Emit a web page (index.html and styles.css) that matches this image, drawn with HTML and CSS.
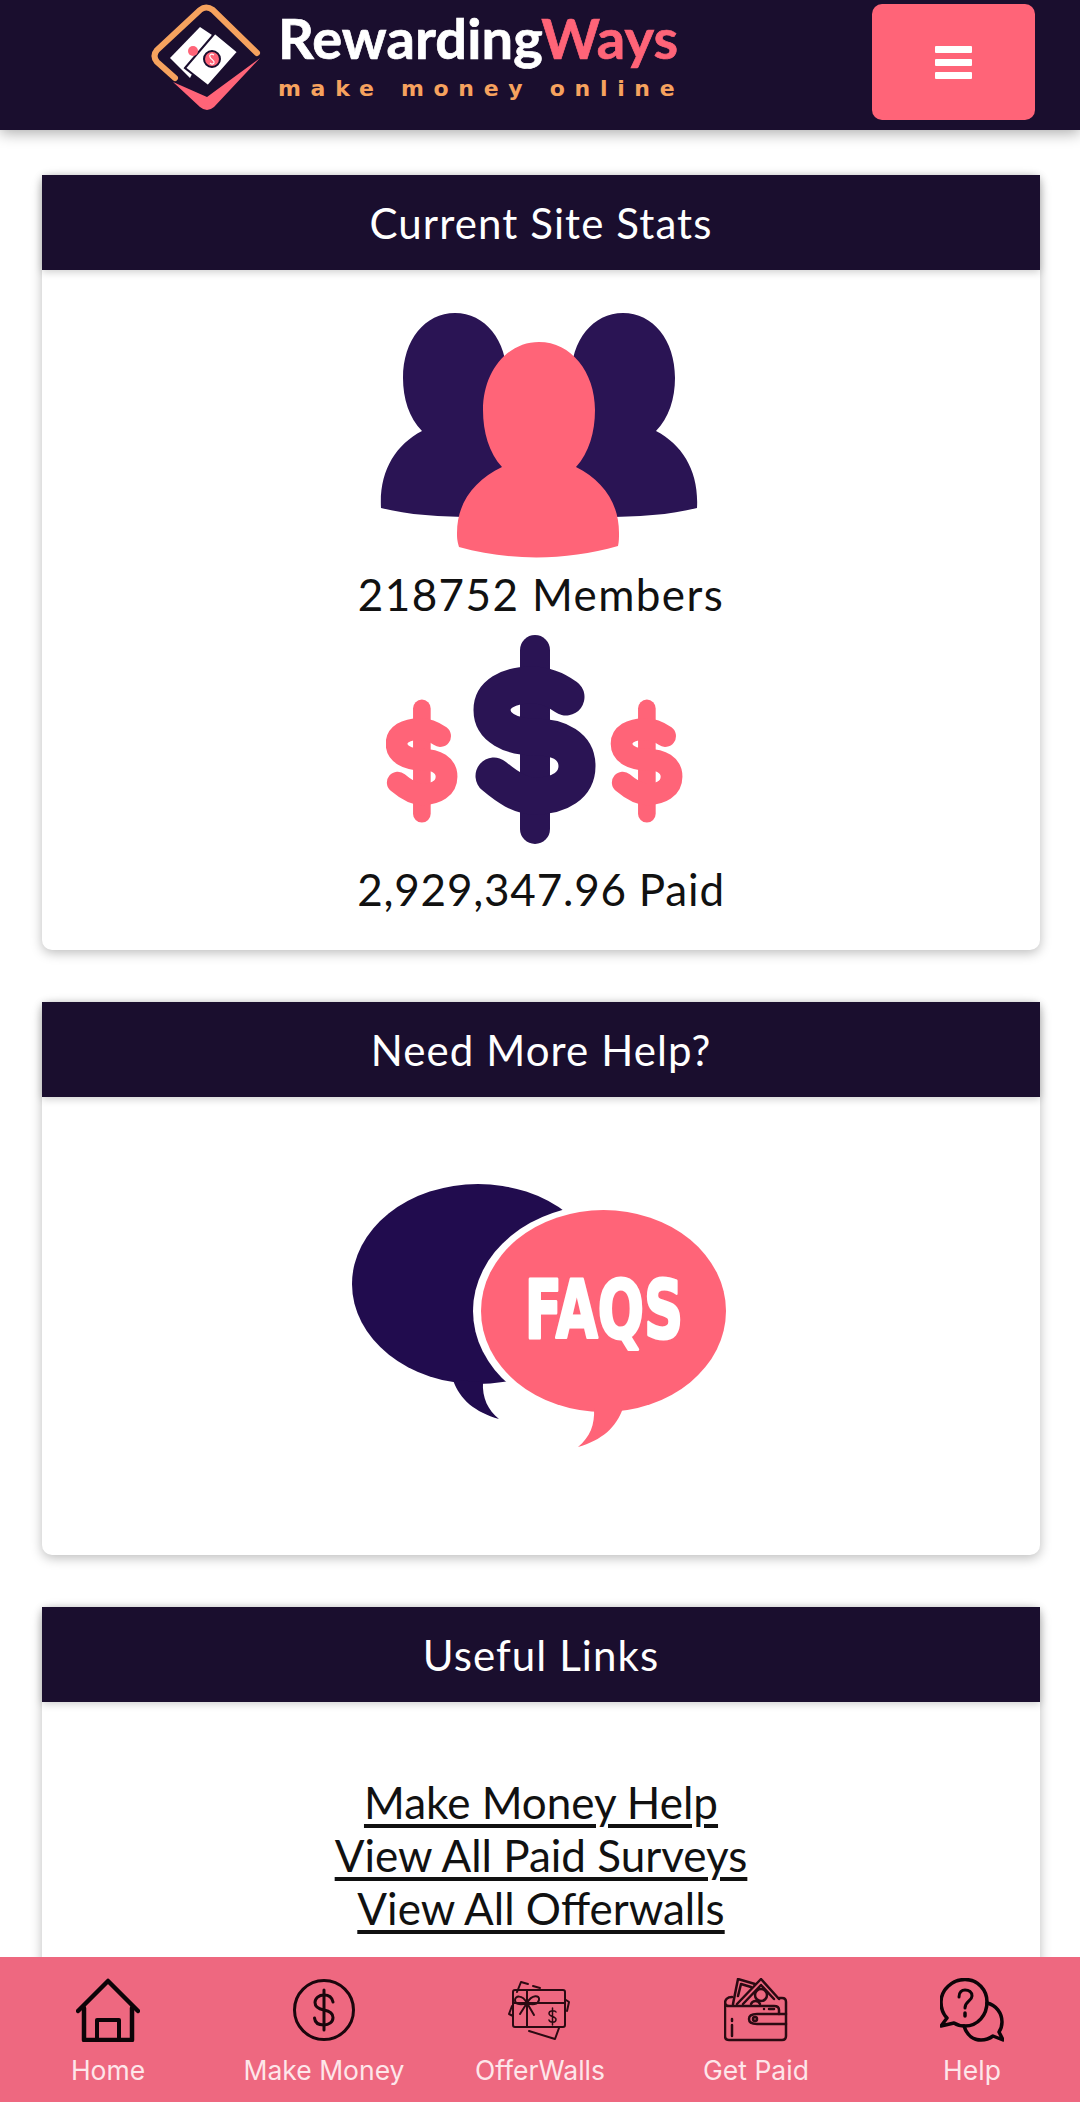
FILE: index.html
```html
<!DOCTYPE html>
<html lang="en">
<head>
  <meta charset="UTF-8">
  <meta name="viewport" content="width=device-width, initial-scale=1.0">
  <title>RewardingWays</title>
  <link rel="stylesheet" href="styles.css">
</head>
<body>
  <div class="page">
    <header class="topbar">
      <a class="brand" href="#">
        <svg class="brand-mark" viewBox="10 0 112 112" width="112" height="112">
          <path d="M35 78 L17 62 Q12 56 17 50 L60 10 Q66 5 73 10 L117 53" fill="none" stroke="#f6a25e" stroke-width="6" stroke-linecap="round"/>
          <path d="M33 82 L67 97 L120 58 L74 107 Q67 113 60 107Z" fill="#ff6478"/>
          <path d="M30 58 L60 27 L72 35 L50 78Z" fill="#fff"/>
          <path d="M45 68 L75 33 L98 52 L68 86Z" fill="#fff" stroke="#1a0e2e" stroke-width="2"/>
          <circle cx="53" cy="51" r="5" fill="#ff6478"/>
          <circle cx="72" cy="59" r="8" fill="#ff6478" stroke="#1a0e2e" stroke-width="2"/>
          <path d="M74 55 C71 53 69 55 70 57 C71 60 75 60 74 63 C73 65 71 64 70 63" fill="none" stroke="#fff" stroke-width="1.200"/>
        </svg>
        <span class="brand-text">
          <span class="brand-name">Rewarding<em>Ways</em></span>
          <span class="brand-tag">make money online</span>
        </span>
      </a>
      <button class="menu-btn" type="button" aria-label="Menu"><i></i><i></i><i></i></button>
    </header>

    <main class="content">
      <section class="card stats">
        <h2 class="card-head">Current Site Stats</h2>
        <svg class="users-art" viewBox="40 23 322 245" width="322" height="245">
          <g fill="#2a1454">
            <path d="M41 218 C39 182 55 155 82 141 C69 128 63 108 63 88 C63 50 85 23 115 23 C145 23 167 50 167 88 L190 226 C130 228 80 228 41 218Z"/>
            <path d="M357 218 C359 182 343 155 316 141 C329 128 335 108 335 88 C335 50 313 23 283 23 C253 23 231 50 231 88 L208 226 C268 228 318 228 357 218Z"/>
          </g>
          <path d="M119 257 C117 250 117 247 117 243 C117 212 135 190 162 177 C149 163 143 142 143 120 C143 82 167 52 199 52 C231 52 255 82 255 120 C255 142 249 163 236 177 C262 190 279 212 279 243 C279 247 279 252 278 256 C225 271 170 271 119 257Z" fill="#ff6478"/>
        </svg>
        <p class="stat">218752 Members</p>
        <svg class="money-art" viewBox="46 15 310 212" width="310" height="212">
          <defs>
            <g id="dollar" fill="none" stroke-width="37" stroke-linecap="round">
              <path d="M195 31 V210" stroke-width="30"/>
              <path d="M226 78 C215 70 205 66 192 66 C167 66 152 76 152 91 C152 108 170 118 195 118 C220 118 237 128 237 147 C237 166 220 177 195 177 C180 177 167 168 154 157"/>
            </g>
          </defs>
          <use href="#dollar" stroke="#2a1454"/>
          <use href="#dollar" stroke="#ff6478" transform="translate(-32.8 71.2) scale(.588)"/>
          <use href="#dollar" stroke="#ff6478" transform="translate(192.2 71.2) scale(.588)"/>
        </svg>
        <p class="stat stat-paid">2,929,347.96 Paid</p>
      </section>

      <section class="card help">
        <h2 class="card-head">Need More Help?</h2>
        <svg class="faq-art" viewBox="22 23 374 264" width="374" height="264">
          <ellipse cx="148" cy="124" rx="126" ry="100" fill="#210c4e"/>
          <path d="M123 220 C130 240 145 252 169 259 C158 250 152 238 153 222Z" fill="#210c4e"/>
          <ellipse cx="272" cy="151" rx="129" ry="106" fill="#fff"/>
          <ellipse cx="273.500" cy="151" rx="122.500" ry="101" fill="#ff6478"/>
          <path d="M264 248 C265 265 260 277 248 287 C272 280 286 268 293 248Z" fill="#ff6478"/>
          <text class="faq-text" transform="translate(274 178) scale(.68 1)" text-anchor="middle">FAQS</text>
        </svg>
      </section>

      <section class="card links">
        <h2 class="card-head">Useful Links</h2>
        <div class="link-list">
          <a href="#">Make Money Help</a>
          <a href="#">View All Paid Surveys</a>
          <a href="#">View All Offerwalls</a>
        </div>
      </section>
    </main>

    <nav class="bottom-nav">
      <a class="nav-item" href="#">
        <svg viewBox="0 0 64 64" width="64" height="64" fill="none" stroke="#0d0408" stroke-width="4.500" stroke-linejoin="round" stroke-linecap="round">
          <path d="M2 33 L32 3 L62 33"/>
          <path d="M8 30 V62 H56 V30"/>
          <path d="M21 62 V42 H43 V62" stroke-width="4"/>
        </svg>
        <span>Home</span>
      </a>
      <a class="nav-item" href="#">
        <svg viewBox="0 0 64 64" width="64" height="64" fill="none" stroke="#1a060c" stroke-linecap="round">
          <circle cx="32" cy="32" r="29.500" stroke-width="3"/>
          <path d="M41 24 C40 19 36 17 32 17 C27 17 23 20 23 24.500 C23 29 27 31 32 32 C37 33 41 35 41 39.500 C41 44 37 47 32 47 C27 47 23 45 22.500 40" stroke-width="3"/>
          <path d="M32 12 V52" stroke-width="3"/>
        </svg>
        <span>Make Money</span>
      </a>
      <a class="nav-item" href="#">
        <svg viewBox="0 0 64 64" width="64" height="64" fill="none" stroke="#2b0a12" stroke-width="2" stroke-linecap="round" stroke-linejoin="round">
          <path d="M9 14 L13 4 L20 6 M25 8 L32 10"/>
          <path d="M4 28 L1 36 L5 38"/>
          <path d="M21 53 L47 61 L51 50"/>
          <path d="M58 22 L61 24 L59 33"/>
          <rect x="5" y="12" width="52" height="37" rx="2"/>
          <path d="M5 25 H57 M19 12 V49"/>
          <path d="M19 25 C14 16 7 18 7 22 C7 27 14 27 19 25 C24 16 32 17 31 22 C30 27 24 27 19 25 M19 25 L12 36 M19 25 L26 37"/>
          <path d="M48 34 C47 32 41 32 41 35.500 C41 39 48 38 48 41.500 C48 45 42 45 41 42 M44.500 30 V47" stroke-width="1.500"/>
        </svg>
        <span>OfferWalls</span>
      </a>
      <a class="nav-item" href="#">
        <svg viewBox="0 0 64 64" width="64" height="64" fill="none" stroke="#2b0a12" stroke-width="2.500" stroke-linecap="round" stroke-linejoin="round">
          <path d="M9 26 L14 1 L31 6"/>
          <path d="M13 26 L37 1 L55 21"/>
          <path d="M14 18 L17 6 L27 9 M19 26 L37 7 L50 21"/>
          <circle cx="37" cy="17" r="6"/>
          <path d="M27 26 C29 22 34 22 36 26"/>
          <path d="M8 19 C3 19 1 22 1 25 V58 Q1 62 5 62 H58 Q62 62 62 58 V46"/>
          <path d="M1 25 Q1 28 5 28 H50 Q55 28 55 32 V36"/>
          <path d="M55 20 H58 Q62 20 62 24 V36"/>
          <path d="M62 46 H33 Q25 46 25 41 Q25 36 33 36 H62 V46Z"/>
          <circle cx="31" cy="41" r="2"/>
          <path d="M8 41 V43 M8 47 V58 M40 31 V31 M45 31 H50"/>
        </svg>
        <span>Get Paid</span>
      </a>
      <a class="nav-item" href="#">
        <svg viewBox="0 0 64 64" width="64" height="64" fill="none" stroke="#0d0408" stroke-width="3.500" stroke-linejoin="round" stroke-linecap="round">
          <path d="M25 1.500 C12 1.500 1 12 1 24 C1 31 3 36 7 40 L1 48 L14 45 C17 47 21 48 25 48 C38 48 47 37 47 24 C47 12 38 1.500 25 1.500Z"/>
          <path d="M47 25 C56 27 62 35 62 44 C62 48 61 51 59 54 L63 62 L53 58 C49 61 45 62 41 62 C34 62 27 58 24 48"/>
          <path d="M19 19 C19 14 22 12 25 12 C29 12 32 14 32 18 C32 23 25 23 25 30" stroke-width="3"/>
          <path d="M25 35 V38" stroke-width="3.500"/>
        </svg>
        <span>Help</span>
      </a>
    </nav>
  </div>
</body>
</html>
```

FILE: styles.css
```css
* { box-sizing: border-box; }
html, body { margin: 0; height: 100%; }
body { font-family: Lato, "Open Sans", sans-serif; background: #fff; color: #111; }
a { color: inherit; }

.page { height: 100vh; display: flex; flex-direction: column; overflow: hidden; }

.topbar { flex: none; height: 130px; background: #1a0e2e; box-shadow: 0 3px 14px #0005; display: flex; align-items: flex-start; padding: 4px 45px 0 150px; position: relative; z-index: 2; }
.brand { display: flex; align-items: flex-start; gap: 16px; margin-top: -4px; text-decoration: none; }
.brand-mark { display: block; }
.brand-text { display: flex; flex-direction: column; width: 400px; }
.brand-name { font-weight: bold; font-size: 56px; line-height: 64px; margin-top: 6px; letter-spacing: .1px; color: #fff; -webkit-text-stroke: .7px; white-space: nowrap; }
.brand-name em { font-style: normal; color: #ff6478; }
.brand-tag { font-family: "DejaVu Sans", sans-serif; font-weight: bold; font-size: 22px; line-height: 26px; letter-spacing: 9.700px; color: #f6a25e; white-space: nowrap; margin-top: 6px; }
.menu-btn { margin-left: auto; width: 163px; height: 116px; border: 0; border-radius: 10px; background: #ff6478; display: flex; flex-direction: column; align-items: center; justify-content: center; gap: 6px; padding: 0; }
.menu-btn i { display: block; width: 37px; height: 7px; background: #fff; border-radius: 1px; }

.content { flex: 1; min-height: 0; overflow: hidden; padding: 45px 40px 0 42px; }

.card { background: #fff; border-radius: 10px; box-shadow: 0 3px 12px #0004; margin-bottom: 52px; text-align: center; }
.card-head { margin: 0; height: 95px; background: #1a0e2e; color: #fff; font-size: 42px; font-weight: 400; line-height: 97px; letter-spacing: 1.100px; box-shadow: 0 2px 8px #0003; }
.stats { height: 775px; }
.help { height: 553px; }
.links { height: 600px; }
.users-art { display: block; margin: 43px auto 0; }
.money-art { display: block; margin: 13px auto 0; }
.stat { margin: 10px 0 0; font-size: 44px; line-height: 53px; letter-spacing: 1.400px; }
.stat-paid { margin-top: 17px; letter-spacing: .8px; }
.faq-art { display: block; margin: 86px auto 0; transform: translateX(-2px); }
.faq-text { font-family: "DejaVu Sans", sans-serif; font-weight: bold; font-size: 80px; fill: #fff; stroke: #fff; stroke-width: 3px; stroke-linejoin: round; }

.link-list { padding-top: 74px; display: flex; flex-direction: column; align-items: center; }
.link-list a { font-size: 44px; line-height: 53px; text-decoration-thickness: 4px; text-underline-offset: 5px; }

.bottom-nav { flex: none; height: 145px; background: #ee6880; display: grid; grid-template-columns: repeat(5, 1fr); padding-top: 21px; position: relative; z-index: 3; }
.nav-item { display: flex; flex-direction: column; align-items: center; text-decoration: none; color: #fde6ea; }
.nav-item svg { display: block; }
.nav-item span { font-family: Inter, Lato, sans-serif; font-size: 26.500px; line-height: 32px; margin-top: 12px; }
```
